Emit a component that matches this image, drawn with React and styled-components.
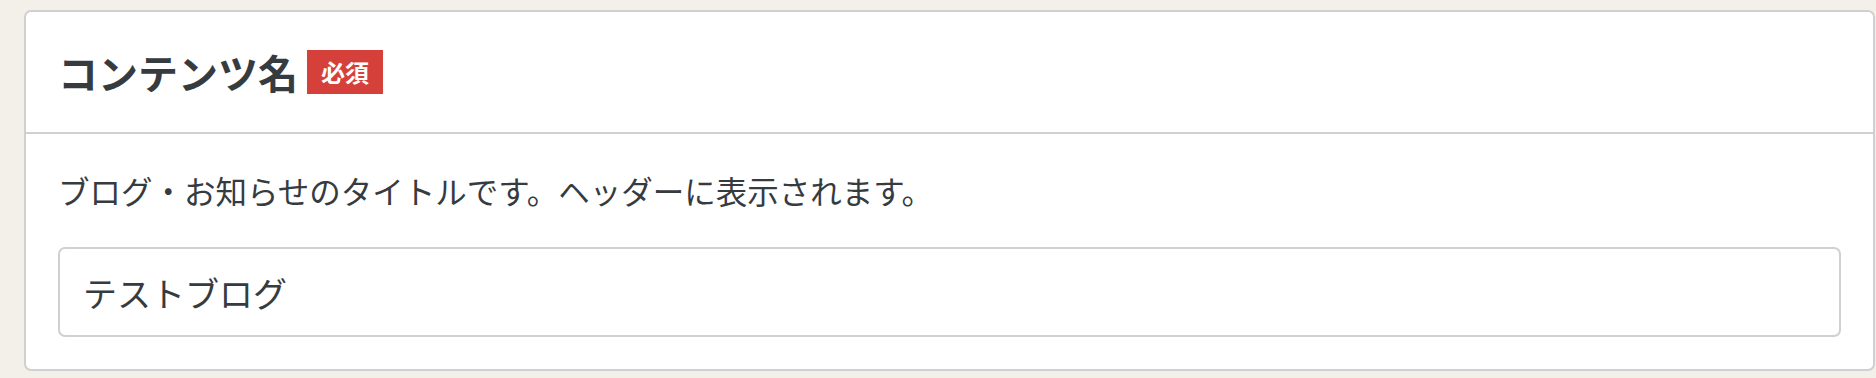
import React from "react";
import styled, { createGlobalStyle } from "styled-components";

const Global = createGlobalStyle`
  html, body { margin: 0; padding: 0; background: #f3f0e9; }
  body { font-family: "Noto Sans CJK JP", "Noto Sans", sans-serif; color: #363b3f; }
  * { box-sizing: border-box; }
`;

const Page = styled.div`
  padding: 10px 1px 7px 24px;
`;

const Card = styled.section`
  background: #fff;
  border: 2px solid #d0d0d0;
  border-radius: 7px;
`;

const Header = styled.header`
  display: flex;
  align-items: center;
  padding: 32px;
  border-bottom: 2px solid #d0d0d0;
`;

const Title = styled.h2`
  margin: 0;
  font-size: 40px;
  line-height: 56px;
  font-weight: 700;
  color: #363b3f;
`;

const Badge = styled.span`
  display: inline-flex;
  align-items: center;
  justify-content: center;
  height: 44px;
  margin-left: 9px;
  padding: 0 14px;
  background: #d6403a;
  color: #fff;
  font-size: 24px;
  font-weight: 700;
  line-height: 1;
`;

const Body = styled.div`
  display: flex;
  flex-direction: column;
  padding: 32px;
`;

const Description = styled.p`
  margin: 0 0 33px;
  font-size: 31.5px;
  line-height: 48px;
  color: #363b3f;
`;

const TextInput = styled.input`
  width: 100%;
  height: 90px;
  padding: 0 23px;
  border: 2px solid #d0d0d0;
  border-radius: 7px;
  font-family: "Noto Sans CJK JP", "Noto Sans", sans-serif;
  font-size: 34px;
  color: #363b3f;
  background: #fff;
  outline: none;
`;

export default function App() {
  return (
    <>
      <Global />
      <Page>
        <Card>
          <Header>
            <Title>コンテンツ名</Title>
            <Badge>必須</Badge>
          </Header>
          <Body>
            <Description>ブログ・お知らせのタイトルです。ヘッダーに表示されます。</Description>
            <TextInput defaultValue="テストブログ" />
          </Body>
        </Card>
      </Page>
    </>
  );
}
